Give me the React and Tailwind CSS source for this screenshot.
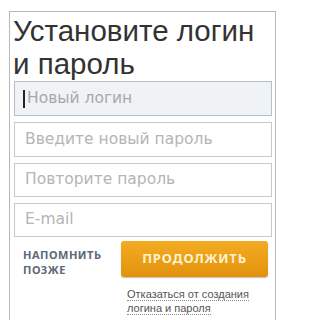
export default function App() {
  return (
    <div className="w-[283px] h-[320px] bg-white overflow-hidden" style={{ fontFamily: '"Liberation Sans", Arial, sans-serif' }}>
      <div className="ml-[9px] mt-[11px] w-[267px] h-[330px] border border-[#b8b8b8] px-[3px]">
        <h1 className="text-[29.5px] leading-[33px] text-[#333333] font-normal pt-[2px]">
          Установите логин
          <br />и пароль
        </h1>
        <div
          className="mt-[1px] flex flex-col gap-[6px] pl-[1px] text-[15.5px]"
          style={{ fontFamily: '"DejaVu Sans", Verdana, sans-serif' }}
        >
          <div className="h-[35px] border border-[#b3bfc9] bg-[#eff3f6] flex items-center px-[8px] text-[#a9a9a9]">
            <span className="w-[2px] h-[18px] bg-[#222] mr-[2px]" />
            Новый логин
          </div>
          <div className="h-[35px] border border-[#c8c8c8] flex items-center px-[10px] text-[#b5b5b5]">
            Введите новый пароль
          </div>
          <div className="h-[34px] border border-[#c8c8c8] flex items-center px-[10px] text-[#b5b5b5]">
            Повторите пароль
          </div>
          <div className="h-[34px] border border-[#c8c8c8] flex items-center px-[10px] text-[#b5b5b5]">
            E-mail
          </div>
        </div>
        <div className="mt-[4px] flex" style={{ fontFamily: '"Noto Sans", sans-serif' }}>
          <div className="w-[108px] pl-[10px] pt-[6px] text-[11px] leading-[15px] font-bold tracking-[0.5px] text-[#5e6876]">
            НАПОМНИТЬ
            <br />
            ПОЗЖЕ
          </div>
          <div className="flex flex-col">
            <button className="w-[147px] h-[36px] rounded-[3px] bg-gradient-to-b from-[#f3ac22] to-[#e3920a] shadow-[0_1px_1px_rgba(0,0,0,0.25)] text-[13px] font-bold tracking-[0.8px] text-[#fff3cf]">
              ПРОДОЛЖИТЬ
            </button>
            <div
              className="mt-[10px] pl-[6px] text-[11px] leading-[14px] text-[#555]"
              style={{ fontFamily: '"Liberation Sans", Arial, sans-serif' }}
            >
              <span className="border-b border-dotted border-[#888]">Отказаться от создания</span>
              <br />
              <span className="border-b border-dotted border-[#888]">логина и пароля</span>
            </div>
          </div>
        </div>
      </div>
    </div>
  );
}
